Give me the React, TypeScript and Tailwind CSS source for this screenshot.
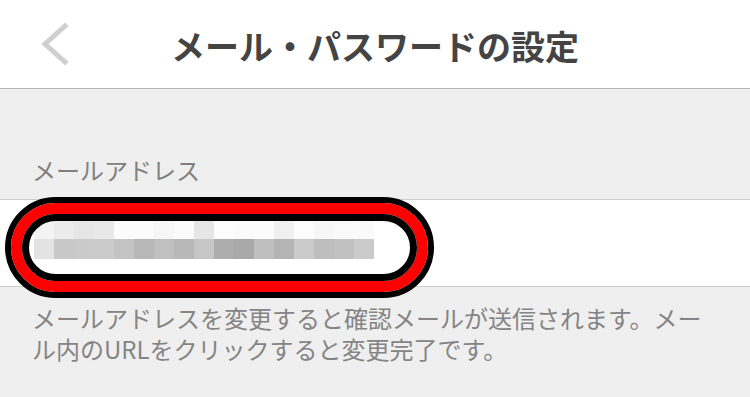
import React from 'react'

// pixelated (blurred) email address — two rows of 20px blocks
const TOP_ROW = [
  'bg-[#f3f3f3]', 'bg-[#ebebeb]', 'bg-[#e6e6e6]', 'bg-[#e8e8e8]', 'bg-[#fbfbfb]', 'bg-[#fbfbfb]',
  'bg-[#f6f6f6]', 'bg-[#fbfbfb]', 'bg-[#e6e6e6]', 'bg-[#fcfcfc]', 'bg-[#fbfbfb]', 'bg-[#fbfbfb]',
  'bg-[#f0f0f0]', 'bg-[#fcfcfc]', 'bg-[#f7f7f7]', 'bg-[#f9f9f9]', 'bg-[#fafafa]',
]
const BOTTOM_ROW = [
  'bg-[#e3e3e3]', 'bg-[#c8c8c8]', 'bg-[#cacaca]', 'bg-[#cbcbcb]', 'bg-[#c4c4c4]', 'bg-[#b7b7b7]',
  'bg-[#c0c0c0]', 'bg-[#b8b8b8]', 'bg-[#c6c6c6]', 'bg-[#adadad]', 'bg-[#a8a8a8]', 'bg-[#bfbfbf]',
  'bg-[#b4b4b4]', 'bg-[#cbcbcb]', 'bg-[#bdbdbd]', 'bg-[#c1c1c1]', 'bg-[#cbcbcb]',
]

const FONT = '[font-family:"Noto_Sans_CJK_JP","Noto_Sans",sans-serif]'

export default function App(): JSX.Element {
  return (
    <div className={`relative w-[750px] h-[397px] overflow-hidden bg-[#efefef] ${FONT}`}>
      {/* Header */}
      <div className="relative h-[89px] bg-white border-b border-[#b4b4b4] flex items-center justify-center">
        <button className="absolute left-[38px] top-[22px] w-[34px] h-[44px] flex items-center justify-center">
          <svg width="34" height="44" viewBox="0 0 34 44" fill="none">
            <path d="M27 4 L7 22 L27 40" stroke="#cfcfcf" strokeWidth="5" strokeLinecap="square" />
          </svg>
        </button>
        <h1 className="text-[34px] font-bold text-[#444] leading-none pt-[4px]">メール・パスワードの設定</h1>
      </div>

      {/* Email section */}
      <div className="pt-[63px] pb-[11px] px-[32px] text-[24px] leading-[36px] text-[#808080]">メールアドレス</div>
      <div className="h-[88px] bg-white border-y border-[#cdcdcd] pl-[34px] pt-[19px]">
        <div className="flex">
          {TOP_ROW.map((c, i) => (
            <div key={i} className={`w-[20px] h-[20px] ${c}`} />
          ))}
        </div>
        <div className="flex">
          {BOTTOM_ROW.map((c, i) => (
            <div key={i} className={`w-[20px] h-[20px] ${c}`} />
          ))}
        </div>
      </div>
      <p className="pt-[15px] px-[32px] text-[24px] leading-[31px] text-[#858585]">
        メールアドレスを変更すると確認メールが送信されます。メール内のURLをクリックすると変更完了です。
      </p>

      {/* Red highlight annotation */}
      <div className="absolute left-[5px] top-[197px] w-[429px] h-[101px] rounded-full border-[6px] border-black">
        <div className="w-full h-full rounded-full border-[11px] border-[#ff0000]">
          <div className="w-full h-full rounded-full border-[7px] border-black" />
        </div>
      </div>
    </div>
  )
}
